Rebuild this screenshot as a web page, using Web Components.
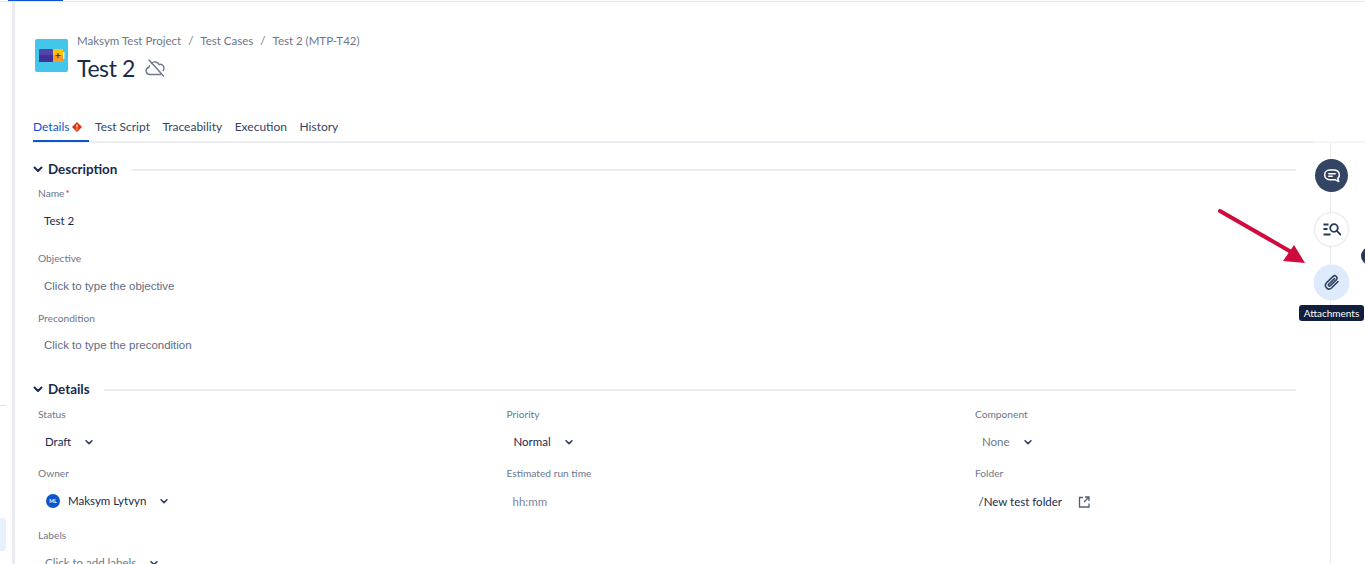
<!DOCTYPE html>
<html lang="en">
<head>
<meta charset="utf-8">
<title>Test 2 (MTP-T42)</title>
<style>
  html, body { margin: 0; height: 100%; overflow: hidden; background: #fff; }
  body { font-family: Lato, "Liberation Sans", sans-serif; color: #172b4d; }
</style>
</head>
<body>
<app-shell></app-shell>
<script>
const chevron = `<svg width="12" height="12" viewBox="0 0 12 12" fill="none"><path d="M2.500 4.500 6 8l3.500-3.500" stroke="currentColor" stroke-width="2" stroke-linecap="round" stroke-linejoin="round"/></svg>`;

// top strip plus side strip plus the page column
class AppShell extends HTMLElement {
  constructor() {
    super();
    this.attachShadow({ mode: 'open' }).innerHTML = `
      <style>
        :host { display: flex; flex-direction: column; width: 1365px; height: 564px; overflow: hidden; position: relative; }
        .top { flex: none; height: 2px; box-sizing: border-box; border-bottom: 1px solid #e4e5ea; }
        .top i { display: block; width: 55px; height: 1px; margin-left: 8px; background: #0c55cf; }
        .row { flex: 1; display: flex; min-height: 0; }
        side-strip { flex: none; }
        .page { flex: 1; min-width: 0; display: flex; flex-direction: column; }
      </style>
      <div class="top"><i></i></div>
      <div class="row">
        <side-strip></side-strip>
        <div class="page">
          <page-header></page-header>
          <tab-bar></tab-bar>
          <page-body></page-body>
        </div>
      </div>
      <arrow-note></arrow-note>
    `;
  }
}

class SideStrip extends HTMLElement {
  constructor() {
    super();
    this.attachShadow({ mode: 'open' }).innerHTML = `
      <style>
        :host { display: flex; flex-direction: column; width: 12px; height: 100%; border-right: 3px solid #ebecf2; }
        .rule { width: 6px; height: 1px; background: #dfe1e6; margin-top: 403px; }
        .pill { width: 6px; height: 33px; background: #e9f0fd; border-radius: 0 3px 3px 0; margin-top: 112px; }
      </style>
      <div class="rule"></div>
      <div class="pill"></div>
    `;
  }
}

class PageHeader extends HTMLElement {
  constructor() {
    super();
    this.attachShadow({ mode: 'open' }).innerHTML = `
      <style>
        :host { display: flex; flex: none; gap: 9px; height: 110px; padding: 30px 0 0 20px; box-sizing: border-box; }
        .logo { flex: none; margin-top: 7px; }
        .crumbs { display: flex; gap: 7px; font-size: 11.500px; line-height: 18px; color: #6b778c; }
        .title { display: flex; align-items: center; gap: 10px; font-size: 23px; letter-spacing: -.4px; line-height: 34px; margin-top: 1px; color: #172b4d; }
        svg { display: block; }
      </style>
      <svg class="logo" width="33" height="33" viewBox="0 0 33 33">
        <rect width="33" height="33" rx="2" fill="#42c6ea"/>
        <rect x="4" y="10" width="14" height="13" rx="1" fill="#5244ab"/>
        <rect x="4" y="16" width="14" height="7" rx="1" fill="#403294"/>
        <rect x="18" y="10" width="10" height="13" rx="1" fill="#ffc400"/>
        <rect x="18" y="16" width="10" height="7" rx="1" fill="#ff991f"/>
        <rect x="28" y="13" width="1.500" height="7" fill="#d5f1f9"/>
        <path d="M20.500 16.500h5M23 14v5" stroke="#403294" stroke-width="1.200"/>
      </svg>
      <div>
        <div class="crumbs"><span>Maksym Test Project</span><span>/</span><span>Test Cases</span><span>/</span><span>Test 2 (MTP-T42)</span></div>
        <div class="title"><span>Test 2</span>
          <svg width="21" height="18" viewBox="0 0 21 18" fill="none" stroke="#6b778c" stroke-width="1.400" stroke-linecap="round" stroke-linejoin="round">
            <path d="M6.500 4.500A4.500 4.500 0 0 1 14 5.500a3.800 3.800 0 0 1 5 3.500 3.500 3.500 0 0 1-.8 2.500M15.500 15.500H5a3.700 3.700 0 0 1-1-7.300c.1-.6.3-1 .5-1.400"/>
            <path d="M4 1 18.500 17"/>
          </svg>
        </div>
      </div>
    `;
  }
}

class TabBar extends HTMLElement {
  constructor() {
    super();
    this.attachShadow({ mode: 'open' }).innerHTML = `
      <style>
        :host { display: flex; flex: none; gap: 12.500px; height: 31px; margin-left: 18px; font-size: 12px;
          background: linear-gradient(#ebecf2, #ebecf2) 0 100% / calc(100% - 52px) 2px no-repeat,
                      linear-gradient(#f4f5f7, #f4f5f7) 100% 100% / 52px 2px no-repeat; }
        .tab { display: flex; align-items: flex-start; gap: 2px; line-height: 30px; height: 30px; box-sizing: border-box; color: #344563; }
        .on { color: #0c55cf; border-bottom: 2px solid #0c55cf; padding-right: 7px; margin-right: -6px; }
        svg { margin-top: 10px; }
      </style>
      <div class="tab on">Details
        <svg width="10" height="10" viewBox="0 0 10 10"><path d="M5 0 10 5 5 10 0 5Z" fill="#de350b"/><path d="M5 2.500v3M5 6.500v1" stroke="#fff" stroke-width="1.200"/></svg>
      </div>
      <div class="tab">Test Script</div>
      <div class="tab">Traceability</div>
      <div class="tab">Execution</div>
      <div class="tab">History</div>
    `;
  }
}

// content under the tabs: the form and the rail beside it
class PageBody extends HTMLElement {
  constructor() {
    super();
    this.attachShadow({ mode: 'open' }).innerHTML = `
      <style>
        :host { display: flex; flex: 1; min-height: 0; }
        .form { flex: 1; min-width: 0; padding: 16px 0 0 18px; }
        .cols { display: grid; grid-template-columns: 468.500px 468.500px 1fr; padding-top: 1px; }
      </style>
      <div class="form">
        <section-head>Description</section-head>
        <form-field label="Name" required gap="15"><value-text>Test 2</value-text></form-field>
        <form-field label="Objective" gap="10"><value-text hint>Click to type the objective</value-text></form-field>
        <form-field label="Precondition" gap="26"><value-text hint style="padding-top:12px">Click to type the precondition</value-text></form-field>
        <section-head>Details</section-head>
        <div class="cols">
          <form-field label="Status" gap="9"><value-select>Draft</value-select></form-field>
          <form-field label="Priority" gap="9"><value-select>Normal</value-select></form-field>
          <form-field label="Component" gap="9"><value-select muted>None</value-select></form-field>
          <form-field label="Owner" gap="11"><value-select person style="padding-top:13px">Maksym Lytvyn</value-select></form-field>
          <form-field label="Estimated run time" gap="11"><value-text time style="padding-top:14px">hh:mm</value-text></form-field>
          <form-field label="Folder" gap="11"><folder-link>/New test folder</folder-link></form-field>
          <form-field label="Labels" gap="0"><value-select muted style="padding-top:13px">Click to add labels</value-select></form-field>
        </div>
      </div>
      <side-rail></side-rail>
    `;
  }
}

class SectionHead extends HTMLElement {
  constructor() {
    super();
    this.attachShadow({ mode: 'open' }).innerHTML = `
      <style>
        :host { display: flex; align-items: center; height: 20px; gap: 14px; font-size: 13.400px; font-weight: 700; color: #172b4d; }
        svg { flex: none; margin: 0 -9.500px 0 -1.500px; }
        i { flex: 1; height: 2px; margin-top: 2px; background: #ebecf2; }
      </style>
      ${chevron}
      <slot></slot>
      <i></i>
    `;
  }
}

class FormField extends HTMLElement {
  connectedCallback() {
    const label = this.getAttribute('label');
    const star = this.hasAttribute('required') ? '<b>*</b>' : '';
    this.attachShadow({ mode: 'open' }).innerHTML = `
      <style>
        :host { display: block; padding: 7px 0 0 5px; margin-bottom: ${this.getAttribute('gap')}px; }
        .label { font-size: 10.200px; line-height: 14px; color: #6b778c; }
        b { color: #de350b; margin-left: 1px; font-weight: 400; }
      </style>
      <div class="label">${label}${star}</div>
      <slot></slot>
    `;
  }
}

class ValueText extends HTMLElement {
  constructor() {
    super();
    this.attachShadow({ mode: 'open' }).innerHTML = `
      <style>
        :host { display: block; padding: 13px 0 0 6px; font-size: 11.500px; line-height: 16px; color: #172b4d; }
        :host([hint]) { font-family: "Liberation Sans", sans-serif; color: #5e6c84; }
        :host([time]) { color: #7a869a; }
      </style>
      <slot></slot>
    `;
  }
}

class ValueSelect extends HTMLElement {
  connectedCallback() {
    const avatar = this.hasAttribute('person') ? '<span class="av">ML</span>' : '';
    this.attachShadow({ mode: 'open' }).innerHTML = `
      <style>
        :host { display: flex; align-items: center; gap: 13px; padding: 13px 0 0 7px; font-size: 11.500px; line-height: 16px; color: #172b4d; }
        :host([muted]) { color: #6b778c; }
        .av { width: 14px; height: 14px; border-radius: 50%; background: #0c55cf; color: #fff; font-size: 5px; font-weight: 700; text-align: center; line-height: 14px; margin: 0 -5px 0 1px; }
        svg { color: #344563; width: 10px; height: 10px; }
      </style>
      ${avatar}<slot></slot>${chevron}
    `;
  }
}

class FolderLink extends HTMLElement {
  constructor() {
    super();
    this.attachShadow({ mode: 'open' }).innerHTML = `
      <style>
        :host { display: flex; align-items: center; gap: 16px; padding: 14px 0 0 3.500px; font-size: 11.500px; line-height: 16px; color: #172b4d; }
      </style>
      <slot></slot>
      <svg width="12" height="12" viewBox="0 0 12 12" fill="none" stroke="#505f79" stroke-width="1.300">
        <path d="M5 1.500H1.500v9.500h9.500V7.500M7 1h4v4M11 1 6 6"/>
      </svg>
    `;
  }
}

class SideRail extends HTMLElement {
  constructor() {
    super();
    this.attachShadow({ mode: 'open' }).innerHTML = `
      <style>
        :host { flex: none; width: 69px; display: flex; flex-direction: column; align-items: flex-start; gap: 21px; padding: 16px 0 0 19px; box-sizing: border-box;
          background: linear-gradient(#ebecf2, #ebecf2) 34px 0 / 1px 100% no-repeat; }
      </style>
      <rail-button kind="dark">
        <svg width="16" height="16" viewBox="0 0 16 16" fill="none" stroke="#fff" stroke-width="1.500" stroke-linecap="round" stroke-linejoin="round">
          <path d="M5.500 2h5a4.800 4.800 0 0 1 3.300 8.300l.9 3.200-3.700-1.800H5.500a4.850 4.850 0 0 1 0-9.700Z"/><path d="M4.800 5.800h6.400M4.800 8.300h3.400"/>
        </svg>
      </rail-button>
      <rail-button kind="white">
        <svg width="18" height="13" viewBox="0 0 18 13" fill="none" stroke="#253858" stroke-width="1.800">
          <path d="M.5 1.500h5M.5 6h4M.5 11.500h7"/><circle cx="11" cy="5" r="3.800"/><path d="m13.800 7.800 3.700 3.700" stroke-linecap="round"/>
        </svg>
      </rail-button>
      <rail-button kind="on" style="margin-left:-1px">
        <svg width="17" height="17" viewBox="0 0 16 16" fill="none" stroke="#344563" stroke-width="1.500" stroke-linecap="round" stroke-linejoin="round">
          <path d="M14 7.200 8 13.200a3.400 3.400 0 0 1-4.800-4.800L9.500 2.200a2.200 2.200 0 0 1 3.100 3.100L6.700 11.200a1 1 0 0 1-1.400-1.400L10.800 4.300"/>
        </svg>
      </rail-button>
    `;
  }
}

class RailButton extends HTMLElement {
  constructor() {
    super();
    this.attachShadow({ mode: 'open' }).innerHTML = `
      <style>
        :host { display: flex; align-items: center; justify-content: center; width: 33px; height: 33px; border-radius: 50%; box-sizing: border-box; }
        :host([kind=dark]) { background: #344563; }
        :host([kind=white]) { background: #fff; box-shadow: 0 0 2px rgba(9,30,66,.3); }
        :host([kind=on]) { background: #deebff; width: 35px; height: 35px; margin-top: -2px; box-shadow: 0 0 1px rgba(9,30,66,.2); }
      </style>
      <slot></slot>
    `;
  }
}

// red arrow, tooltip and the cut-off badge lie over the page
class ArrowNote extends HTMLElement {
  constructor() {
    super();
    this.attachShadow({ mode: 'open' }).innerHTML = `
      <style>
        :host { display: block; }
        svg { position: absolute; left: 1215px; top: 205px; }
        .tip { position: absolute; left: 1299px; top: 305px; width: 65px; height: 16px; border-radius: 3px; background: #0f1f3d; color: #fff; font-size: 10px; line-height: 16px; text-align: center; }
        .dot { position: absolute; left: 1361px; top: 247px; width: 18px; height: 18px; border-radius: 50%; background: #253858; }
      </style>
      <svg width="95" height="62" viewBox="0 0 95 62">
        <path d="M5 6 78 48" stroke="#cd0b3f" stroke-width="4" stroke-linecap="round"/>
        <path d="M90 58 79 40 68 56Z" fill="#cd0b3f"/>
      </svg>
      <div class="dot"></div>
      <div class="tip">Attachments</div>
    `;
  }
}

customElements.define('side-strip', SideStrip);
customElements.define('page-header', PageHeader);
customElements.define('tab-bar', TabBar);
customElements.define('section-head', SectionHead);
customElements.define('form-field', FormField);
customElements.define('value-text', ValueText);
customElements.define('value-select', ValueSelect);
customElements.define('folder-link', FolderLink);
customElements.define('rail-button', RailButton);
customElements.define('side-rail', SideRail);
customElements.define('page-body', PageBody);
customElements.define('arrow-note', ArrowNote);
customElements.define('app-shell', AppShell);
</script>
</body>
</html>
